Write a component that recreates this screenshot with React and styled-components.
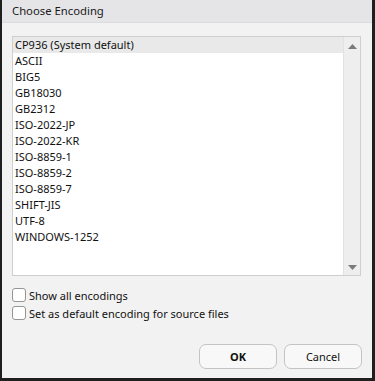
import styled, { createGlobalStyle } from "styled-components";

const encodings = [
  "CP936 (System default)",
  "ASCII",
  "BIG5",
  "GB18030",
  "GB2312",
  "ISO-2022-JP",
  "ISO-2022-KR",
  "ISO-8859-1",
  "ISO-8859-2",
  "ISO-8859-7",
  "SHIFT-JIS",
  "UTF-8",
  "WINDOWS-1252",
];

const GlobalStyle = createGlobalStyle`
  html, body {
    margin: 0;
    padding: 0;
    background: #1f1f1f;
  }
  body {
    font-family: "Noto Sans", "Open Sans", sans-serif;
  }
`;

function App() {
  return (
    <>
      <GlobalStyle />
      <Dialog>
        <TitleBar>Choose Encoding</TitleBar>
        <Body>
          <ListBox>
            <Items>
              {encodings.map((name, i) => (
                <Item key={name} selected={i === 0}>
                  {name}
                </Item>
              ))}
            </Items>
            <Scrollbar>
              <Arrow>
                <svg width="9" height="5" viewBox="0 0 9 5">
                  <path d="M4.5 0 L9 5 L0 5 Z" fill="#7a7a7a" />
                </svg>
              </Arrow>
              <Arrow>
                <svg width="9" height="5" viewBox="0 0 9 5">
                  <path d="M0 0 L9 0 L4.5 5 Z" fill="#7a7a7a" />
                </svg>
              </Arrow>
            </Scrollbar>
          </ListBox>
          <Options>
            <Option>
              <Box />
              Show all encodings
            </Option>
            <Option>
              <Box />
              Set as default encoding for source files
            </Option>
          </Options>
          <Buttons>
            <Button primary>OK</Button>
            <Button>Cancel</Button>
          </Buttons>
        </Body>
      </Dialog>
    </>
  );
}

const Dialog = styled.div`
  margin-left: 2px;
  width: 370px;
  height: 378px;
  background: #f2f2f2;
  display: flex;
  flex-direction: column;
`;

const TitleBar = styled.div`
  height: 22px;
  line-height: 22px;
  padding-left: 10px;
  background: #e5e5e8;
  color: #1a1a1a;
  font-size: 11.3px;
  border-bottom: 1px solid #dcdcdc;
`;

const Body = styled.div`
  flex: 1;
  padding: 13px 10px 0 10px;
  display: flex;
  flex-direction: column;
`;

const ListBox = styled.div`
  height: 240px;
  width: 349px;
  box-sizing: border-box;
  border: 1px solid #cfcfcf;
  background: #fff;
  display: flex;
`;

const Items = styled.ul`
  flex: 1;
  margin: 0;
  padding: 0;
  list-style: none;
`;

const Item = styled.li`
  height: 16px;
  line-height: 16px;
  padding-left: 2px;
  font-size: 11px;
  color: #111;
  background: ${(p) => (p.selected ? "#e9e9e9" : "transparent")};
`;

const Scrollbar = styled.div`
  width: 16px;
  background: #eeeeee;
  border-left: 1px solid #e2e2e2;
  display: flex;
  flex-direction: column;
  justify-content: space-between;
  align-items: center;
  padding: 7px 0 5px;
`;

const Arrow = styled.div`
  display: flex;
  justify-content: center;
`;

const Options = styled.div`
  margin-top: 12px;
  display: flex;
  flex-direction: column;
  gap: 4px;
`;

const Option = styled.label`
  display: flex;
  align-items: center;
  gap: 3px;
  font-size: 11px;
  color: #111;
  height: 14px;
`;

const Box = styled.span`
  width: 12px;
  height: 12px;
  border: 1px solid #959595;
  border-radius: 3px;
  background: #fff;
`;

const Buttons = styled.div`
  margin-top: 24px;
  display: flex;
  justify-content: flex-end;
  gap: 7px;
`;

const Button = styled.button`
  width: 78px;
  height: 25px;
  border: 1px solid #c4c4c4;
  border-radius: 7px;
  background: #f8f8f8;
  font-family: "Noto Sans", "Open Sans", sans-serif;
  font-size: 11px;
  font-weight: ${(p) => (p.primary ? 700 : 400)};
  color: #111;
`;

export default App;
